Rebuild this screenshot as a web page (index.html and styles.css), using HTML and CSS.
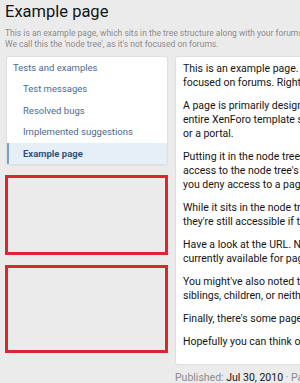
FILE: index.html
```html
<!DOCTYPE html>
<html>
<head>
<meta charset="utf-8">
<link rel="stylesheet" href="styles.css">
</head>
<body>
<div class="page">
  <header class="title-bar">
    <h1 class="title">Example page</h1>
    <p class="desc">This is an example page, which sits in the tree structure along with your forums.<br>We call this the 'node tree', as it's not focused on forums.</p>
  </header>
  <div class="columns">
    <aside class="side">
      <nav class="nav-block">
        <a class="nav-item nav-head">Tests and examples</a>
        <a class="nav-item nav-sub">Test messages</a>
        <a class="nav-item nav-sub">Resolved bugs</a>
        <a class="nav-item nav-sub">Implemented suggestions</a>
        <a class="nav-item nav-sub nav-selected">Example page</a>
      </nav>
      <div class="ad-slot ad-one"></div>
      <div class="ad-slot ad-two"></div>
    </aside>
    <main class="main">
      <div class="content-block">
        <p>This is an example page. It sits in the tree structure along with your forums, but it's not<br>focused on forums. Right now, it is just a page of text.</p>
        <p>A page is primarily designed to display content. It is rendered through the<br>entire XenForo template system, so you can use it for things like a help page<br>or a portal.</p>
        <p>Putting it in the node tree also lets you control who can see it, and you get<br>access to the node tree's permission system. This means that if<br>you deny access to a page, the users won't see it.</p>
        <p>While it sits in the node tree, pages aren't shown in the forum list, but<br>they're still accessible if the user knows the URL.</p>
        <p>Have a look at the URL. Note that only the page name is used, as it is<br>currently available for pages only.</p>
        <p>You might've also noted the list of related pages. You can choose to show<br>siblings, children, or neither.</p>
        <p>Finally, there's some page information shown below.</p>
        <p>Hopefully you can think of some uses for pages!</p>
      </div>
      <div class="page-info"><span class="muted">Published:</span> Jul 30, 2010 <span class="muted">· Page views: 1,234</span></div>
    </main>
  </div>
</div>
</body>
</html>
```

FILE: styles.css
```css
html, body {
  margin: 0;
  padding: 0;
}
body {
  background: #ebebeb;
  font-family: "Segoe UI", Roboto, "Noto Sans", sans-serif;
  color: #141414;
  overflow: hidden;
  width: 300px;
  height: 383px;
}
.page {
  padding: 0 0 0 5px;
}
.title {
  margin: 0;
  font-size: 16.5px;
  line-height: 24px;
  font-weight: 400;
  color: #141414;
}
.desc {
  margin: 4px 0 0;
  font-size: 8.5px;
  line-height: 11px;
  color: #8c8c8c;
  white-space: nowrap;
}
.columns {
  display: flex;
  gap: 7px;
  margin-top: 6px;
  align-items: flex-start;
}
.side {
  flex: 0 0 163px;
  display: flex;
  flex-direction: column;
  gap: 10px;
}
.nav-block {
  background: #fff;
  border: 1px solid #dfdfdf;
  border-radius: 3px;
  margin-left: 1px;
  padding: 0;
  display: flex;
  flex-direction: column;
  box-shadow: 0 1px 1px rgba(0,0,0,0.04);
}
.nav-item {
  display: block;
  font-size: 9.5px;
  line-height: 21.4px;
  color: #4a6a90;
  white-space: nowrap;
}
.nav-head {
  padding-left: 6px;
}
.nav-sub {
  padding-left: 16px;
}
.nav-selected {
  font-weight: 700;
  color: #2d5480;
  background: #e6eff8;
  border-left: 2px solid #7aa2c8;
  padding-left: 14px;
}
.ad-slot {
  border: 3px solid #d9272d;
  background: #ebebeb;
  box-sizing: border-box;
}
.ad-one {
  height: 80px;
}
.ad-two {
  height: 88px;
}
.main {
  flex: 0 0 400px;
}
.content-block {
  background: #fff;
  border: 1px solid #dfdfdf;
  border-radius: 3px;
  padding: 5px 7px 6px;
}
.content-block p {
  margin: 0 0 9px;
  font-size: 10.5px;
  line-height: 14px;
  white-space: nowrap;
}
.page-info {
  font-size: 10.5px;
  line-height: 14px;
  margin-top: 6px;
  white-space: nowrap;
}
.muted {
  color: #8c8c8c;
}
```
